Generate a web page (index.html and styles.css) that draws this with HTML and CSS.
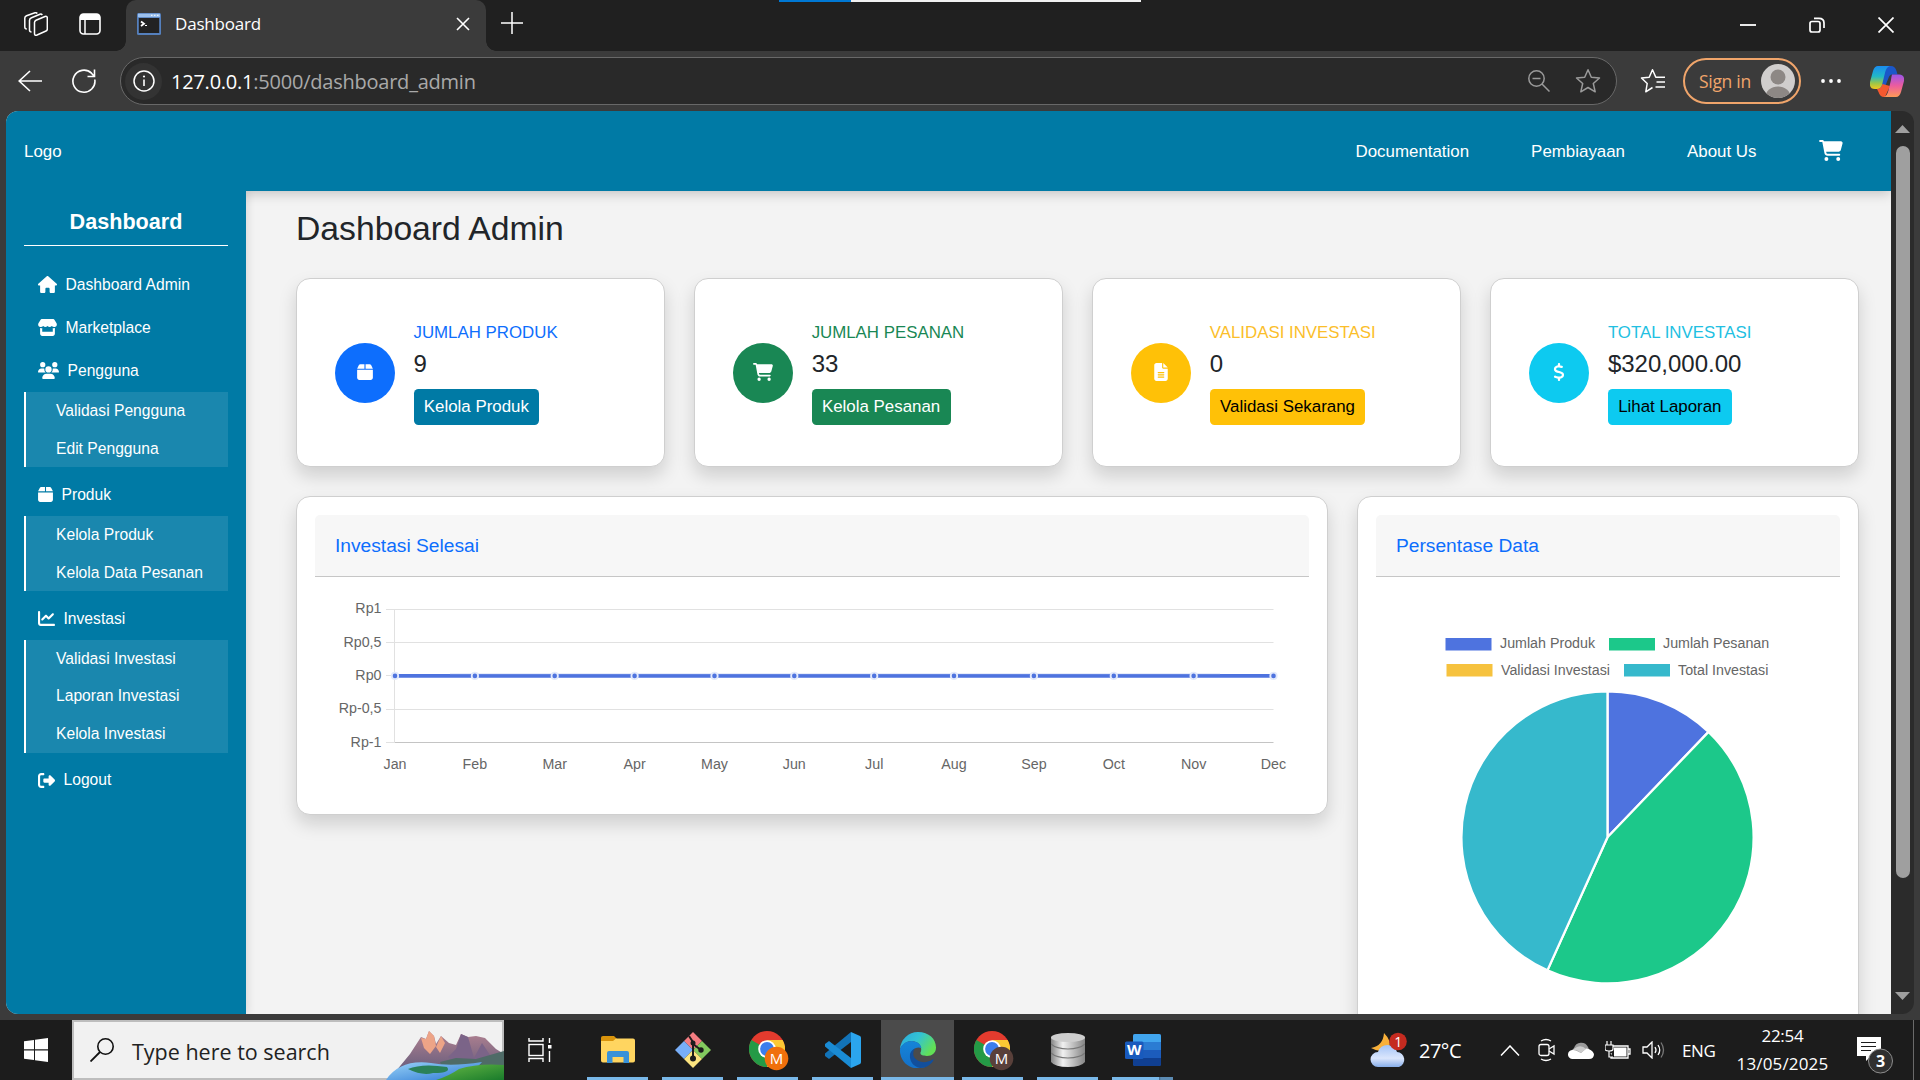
FILE: index.html
```html
<!DOCTYPE html>
<html lang="id">
<head>
<meta charset="utf-8">
<title>Dashboard</title>
<link rel="stylesheet" href="styles.css">
</head>
<body>
<svg class="defs" aria-hidden="true">
  <symbol id="cart" viewBox="0 0 576 512"><path d="M0 24C0 10.7 10.7 0 24 0H69.5c22 0 41.5 12.8 50.6 32h411c26.3 0 45.5 25 38.6 50.4l-41 152.3c-8.5 31.4-37 53.3-69.5 53.3H170.7l5.4 28.5c2.2 11.3 12.1 19.5 23.6 19.5H488c13.3 0 24 10.7 24 24s-10.7 24-24 24H199.7c-34.6 0-64.3-24.6-70.7-58.5L77.4 54.5c-.7-3.8-4-6.5-7.9-6.5H24C10.7 48 0 37.3 0 24zM128 464a48 48 0 1 1 96 0 48 48 0 1 1 -96 0zm336-48a48 48 0 1 1 0 96 48 48 0 1 1 0-96z"/></symbol>
  <symbol id="box" viewBox="0 0 448 512"><path d="M50.7 58.5L0 160H208V32H93.7C75.5 32 58.9 42.3 50.7 58.5zM240 160H448L397.3 58.5C389.1 42.3 372.5 32 354.3 32H240V160zm208 32H0V416c0 35.3 28.7 64 64 64H384c35.3 0 64-28.7 64-64V192z"/></symbol>
  <symbol id="house" viewBox="0 0 576 512"><path d="M575.8 255.5c0 18-15 32.1-32 32.1h-32l.7 160.2c0 2.7-.2 5.4-.5 8.1V472c0 22.1-17.9 40-40 40H392c-22.1 0-40-17.9-40-40V384c0-17.7-14.3-32-32-32H256c-17.7 0-32 14.3-32 32v88c0 22.1-17.9 40-40 40H104c-22.1 0-40-17.9-40-40V287.6H32c-18 0-32-14-32-32.1c0-9 3-17 10-24L266.4 8c7-7 15-8 22-8s15 2 21 7L564.8 231.5c8 7 12 15 11 24z"/></symbol>
  <symbol id="store" viewBox="0 0 576 512"><path d="M112 0H464c14 0 26 7 33 19l61 97c32 50 4 119-55 127a96 96 0 0 1-84-32 96 96 0 0 1-131 0 96 96 0 0 1-131 0 96 96 0 0 1-84 32C14 235-14 166 18 116L79 19C86 7 98 0 112 0zM64 272c24 5 43 4 64-3V384H448V269c21 7 40 8 64 3V448c0 35-29 64-64 64H128c-35 0-64-29-64-64z"/></symbol>
  <symbol id="users" viewBox="0 0 640 512"><path d="M144 0a80 80 0 1 1 0 160A80 80 0 1 1 144 0zM512 0a80 80 0 1 1 0 160A80 80 0 1 1 512 0zM0 299C0 240 48 192 107 192h43c16 0 31 3 45 10-1 7-2 14-2 22 0 38 17 72 43 96H21C10 320 0 310 0 299zM405 320c27-24 43-58 43-96 0-8-1-15-2-22 14-7 29-10 45-10h43c59 0 106 48 106 107 0 12-10 21-21 21zM224 224a96 96 0 1 1 192 0 96 96 0 1 1-192 0zM128 485c0-73 60-133 133-133h118c73 0 133 60 133 133 0 15-12 27-27 27H155c-15 0-27-12-27-27z"/></symbol>
  <symbol id="chart" viewBox="0 0 512 512"><path d="M64 64c0-17.7-14.3-32-32-32S0 46.3 0 64V400c0 44.2 35.8 80 80 80H480c17.7 0 32-14.3 32-32s-14.3-32-32-32H80c-8.8 0-16-7.2-16-16V64zm406.6 86.6c12.5-12.5 12.5-32.8 0-45.3s-32.8-12.5-45.3 0L320 210.7l-57.4-57.4c-12.5-12.5-32.8-12.5-45.3 0l-112 112c-12.5 12.5-12.5 32.8 0 45.3s32.8 12.5 45.3 0L240 221.3l57.4 57.4c12.5 12.5 32.8 12.5 45.3 0l128-128z"/></symbol>
  <symbol id="logout" viewBox="0 0 512 512"><path d="M377.9 105.9L500.7 228.7c7.2 7.2 11.3 17.1 11.3 27.3s-4.1 20.1-11.3 27.3L377.9 406.1c-6.4 6.4-15 9.900-24 9.900c-18.7 0-33.9-15.2-33.9-33.9l0-62.1-128 0c-17.7 0-32-14.3-32-32l0-64c0-17.7 14.3-32 32-32l128 0 0-62.1c0-18.7 15.2-33.9 33.9-33.9c9 0 17.6 3.6 24 9.9zM160 96L96 96c-17.7 0-32 14.3-32 32l0 256c0 17.7 14.3 32 32 32l64 0c17.7 0 32 14.3 32 32s-14.3 32-32 32l-64 0c-53 0-96-43-96-96L0 128C0 75 43 32 96 32l64 0c17.7 0 32 14.3 32 32s-14.3 32-32 32z"/></symbol>
  <symbol id="file" viewBox="0 0 384 512"><path d="M64 0C28.7 0 0 28.7 0 64V448c0 35.3 28.7 64 64 64H320c35.3 0 64-28.7 64-64V160H256c-17.7 0-32-14.3-32-32V0H64zM256 0V128H384L256 0zM112 256H272c8.8 0 16 7.2 16 16s-7.2 16-16 16H112c-8.8 0-16-7.2-16-16s7.2-16 16-16zm0 64H272c8.8 0 16 7.2 16 16s-7.2 16-16 16H112c-8.8 0-16-7.2-16-16s7.2-16 16-16zm0 64H272c8.8 0 16 7.2 16 16s-7.2 16-16 16H112c-8.8 0-16-7.2-16-16s7.2-16 16-16z"/></symbol>
  <symbol id="dollar" viewBox="0 0 320 512"><path d="M160 0c17.7 0 32 14.3 32 32V67.7c1.6 .2 3.1 .4 4.7 .7c.4 .1 .7 .1 1.1 .2l48 8.8c17.4 3.2 28.9 19.9 25.7 37.2s-19.9 28.9-37.2 25.7l-47.5-8.7c-31.3-4.6-58.9-1.5-78.3 6.2s-27.2 18.3-29 28.1c-2 10.7-.5 16.7 1.2 20.4c1.8 3.9 5.5 8.3 12.8 13.2c16.3 10.7 41.3 17.7 73.7 26.3l2.9 .8c28.6 7.6 63.6 16.8 89.6 33.8c14.2 9.3 27.6 21.9 35.9 39.5c8.5 17.9 10.3 37.9 6.4 59.2c-6.9 38-33.1 63.4-65.6 76.7c-13.7 5.6-28.6 9.2-44.4 11V480c0 17.7-14.3 32-32 32s-32-14.3-32-32V445.1c-.4-.1-.9-.1-1.3-.2l-.2 0 0 0c-24.4-3.8-64.5-14.3-91.5-26.3c-16.1-7.2-23.4-26.1-16.2-42.2s26.1-23.4 42.2-16.2c20.9 9.3 55.3 18.5 75.2 21.6c31.9 4.7 58.2 2 76-5.3c16.9-6.9 24.6-16.9 26.8-28.9c1.9-10.6 .4-16.7-1.3-20.4c-1.9-4-5.6-8.4-13-13.3c-16.4-10.7-41.5-17.7-74-26.3l-2.8-.7 0 0C119.4 279.3 84.4 270 58.4 253c-14.2-9.3-27.5-22-35.8-39.6c-8.4-17.9-10.1-37.9-6.1-59.2C23.7 116 52.3 91.2 84.8 78.3c13.3-5.3 27.9-8.9 43.2-11V32c0-17.7 14.3-32 32-32z"/></symbol>
  <symbol id="chrome" viewBox="0 0 36 36">
    <circle cx="18" cy="18" r="18" fill="#e33b2e"/>
    <path d="M18 18 2.4 9A18 18 0 0 0 18 36l7.8-13.5z" fill="#249a46"/>
    <path d="M18 9h15.6A18 18 0 0 1 18 36l7.8-13.5z" fill="#fcc934"/>
    <circle cx="18" cy="18" r="8.8" fill="#fff"/><circle cx="18" cy="18" r="6.9" fill="#3b7ded"/>
  </symbol>
</svg>

<div class="screen">
  <header class="tabstrip">
    <div class="load-bar"></div>
    <svg class="workspaces" viewBox="0 0 24 24" width="24" height="24"><g fill="none" stroke="#fff" stroke-width="1.5" stroke-linejoin="round"><path d="M10.5 10.5Q10.5 9 12 8.300L21 4.500Q23.300 3.800 23.300 6V17Q23.300 18.500 22 19L13 23Q10.500 24 10.500 21.500z"/><path d="M7.500 20Q5.500 20 5.500 18V8.500Q5.500 6.500 7.500 5.700L16 2.200Q17.500 1.800 18.300 3"/><path d="M2.800 17Q.8 17 .8 15V6Q.8 4.500 2.500 3.800L11 .8Q12.500 .5 13.300 1.500"/></g></svg>
    <svg class="tab-actions" viewBox="0 0 22 22" width="22" height="22"><rect x="1" y="1" width="20" height="20" rx="3.500" fill="none" stroke="#fff" stroke-width="1.600"/><path d="M1 7V4Q1 1 4 1H18Q21 1 21 4V7z" fill="#fff"/><path d="M6 7V21" stroke="#fff" stroke-width="1.500"/></svg>
    <div class="tab">
      <svg viewBox="0 0 24 22" width="24" height="22"><rect width="24" height="22" rx="1.500" fill="#5580bd"/><rect x="1" y=".7" width="22" height="3.500" fill="#9cc0ec"/><path d="M14 2.300H22" stroke="#fff" stroke-dasharray="1.500 1.500"/><rect x="1.800" y="5" width="20.400" height="15" fill="#222"/><path d="M4 8.500 7 10.800 4 13" fill="none" stroke="#fff" stroke-width="1.800"/><path d="M8 12.500h2" stroke="#fff"/></svg>
      <span class="tab-title">Dashboard</span>
      <svg viewBox="0 0 14 14" width="14" height="14"><path d="M1 1 13 13M13 1 1 13" stroke="#fff" stroke-width="1.600"/></svg>
    </div>
    <svg class="new-tab" viewBox="0 0 22 22" width="22" height="22"><path d="M11 0V22M0 11H22" stroke="#fff" stroke-width="1.500"/></svg>
    <div class="window-controls">
      <svg viewBox="0 0 16 16" width="16" height="16"><path d="M0 8H16" stroke="#fff" stroke-width="1.800"/></svg>
      <svg viewBox="0 0 16 16" width="16" height="16"><g fill="none" stroke="#fff" stroke-width="1.700"><rect x="1" y="4.500" width="10" height="10.500" rx="2"/><path d="M5 1.300H10Q15 1.300 15 6V11"/></g></svg>
      <svg viewBox="0 0 16 16" width="16" height="16"><path d="M.5 .5 15.500 15.500M15.500 .5 .5 15.500" stroke="#fff" stroke-width="1.700"/></svg>
    </div>
  </header>

  <div class="toolbar">
    <svg class="back" viewBox="0 0 24 22" width="24" height="22"><path d="M24 11H1M12 1 1.200 11 12 21" fill="none" stroke="#fff" stroke-width="1.600"/></svg>
    <svg class="reload" viewBox="0 0 24 24" width="24" height="24"><path d="M22.800 10.500A11 11 0 1 1 19.500 4.200L22 7M22.500 .5V7.500H15.500" fill="none" stroke="#fff" stroke-width="1.600"/></svg>
    <div class="address">
      <span class="site-info"><svg viewBox="0 0 22 22" width="22" height="22"><circle cx="11" cy="11" r="10" fill="none" stroke="#fff" stroke-width="1.500"/><path d="M11 9.500V16" stroke="#fff" stroke-width="1.600"/><circle cx="11" cy="6.500" r="1.100" fill="#fff"/></svg></span>
      <span class="url"><b>127.0.0.1</b>:5000/dashboard_admin</span>
      <svg class="zoom-out" viewBox="0 0 22 22" width="22" height="22"><g fill="none" stroke="#9a9a9a" stroke-width="1.500"><circle cx="8.500" cy="8.500" r="7.700"/><path d="M14 14 21.500 21.500M4.500 8.500H12.500"/></g></svg>
      <svg viewBox="0 0 26 26" width="26" height="26"><path d="M13 1.800 16.300 9.200 24.500 10 18.300 15.500 20.200 23.800 13 19.500 5.800 23.800 7.700 15.500 1.500 10 9.700 9.200z" fill="none" stroke="#9a9a9a" stroke-width="1.500" stroke-linejoin="round"/></svg>
    </div>
    <svg class="favorites" viewBox="0 0 26 26" width="26" height="26"><path d="M16 9.200H15.800L12.500 1.800 9.200 9.200 1.500 10 7.200 15.500 5.800 23.800 12.500 19.500M15.500 9.200H25M16.500 14H25M15.500 19H25" fill="none" stroke="#fff" stroke-width="1.500" stroke-linejoin="round"/></svg>
    <div class="signin">
      <span>Sign in</span>
      <svg viewBox="0 0 34 34" width="34" height="34"><clipPath id="face"><circle cx="17" cy="17" r="17"/></clipPath><g clip-path="url(#face)"><rect width="34" height="34" fill="#d0cecd"/><circle cx="17" cy="13" r="7.500" fill="#8d8885"/><ellipse cx="17" cy="33" rx="12.500" ry="10.500" fill="#8d8885"/></g></svg>
    </div>
    <svg class="more" viewBox="0 0 20 4" width="20" height="4"><circle cx="2" cy="2" r="1.900" fill="#fff"/><circle cx="10" cy="2" r="1.900" fill="#fff"/><circle cx="18" cy="2" r="1.900" fill="#fff"/></svg>
    <svg class="copilot" viewBox="0 0 34 31" width="34" height="31">
      <defs>
        <linearGradient id="cpA" x1="0" y1="0" x2="0" y2="1"><stop offset="0" stop-color="#1a8cf0"/><stop offset=".45" stop-color="#21b8c7"/><stop offset=".75" stop-color="#9bc64a"/><stop offset="1" stop-color="#f2c81d"/></linearGradient>
        <linearGradient id="cpB" x1="0" y1="0" x2="0" y2="1"><stop offset="0" stop-color="#9a55ea"/><stop offset=".5" stop-color="#ec5c9e"/><stop offset="1" stop-color="#ff9a55"/></linearGradient>
      </defs>
      <path d="M8 0H21Q25 0 26.500 5L27.500 8.500H22Q19.500 8.500 18.500 12L14 23H8L12 8z" fill="#1b57c9"/>
      <path d="M8 0H20Q16.500 1 15.200 6L12 19Q11 23 7 23H5Q-1 23 0 16L3 5Q4.500 0 8 0z" fill="url(#cpA)"/>
      <path d="M7 23Q11 23 12.500 18L20 20 15 31H14Q10 31 8.500 26z" fill="#f4582f"/>
      <path d="M22 8.500H29Q35 9 34 15L31 26Q29.500 31 26 31H14Q17 30 18.300 25L21 14Q21.500 10 22 8.500z" fill="url(#cpB)"/>
    </svg>
  </div>

  <div class="viewport">
    <div class="page">
      <nav class="topnav">
        <a class="brand">Logo</a>
        <a>Documentation</a>
        <a>Pembiayaan</a>
        <a>About Us</a>
        <svg class="icon" width="24" height="21"><use href="#cart"/></svg>
      </nav>
      <div class="body">
        <aside class="sidebar">
          <h2>Dashboard</h2>
          <a class="item"><svg class="icon" width="19" height="17"><use href="#house"/></svg>Dashboard Admin</a>
          <a class="item"><svg class="icon" width="19" height="17"><use href="#store"/></svg>Marketplace</a>
          <a class="item"><svg class="icon" width="21" height="17"><use href="#users"/></svg>Pengguna</a>
          <div class="submenu"><a>Validasi Pengguna</a><a>Edit Pengguna</a></div>
          <a class="item"><svg class="icon" width="15" height="17"><use href="#box"/></svg>Produk</a>
          <div class="submenu"><a>Kelola Produk</a><a>Kelola Data Pesanan</a></div>
          <a class="item"><svg class="icon" width="17" height="17"><use href="#chart"/></svg>Investasi</a>
          <div class="submenu"><a>Validasi Investasi</a><a>Laporan Investasi</a><a>Kelola Investasi</a></div>
          <a class="item"><svg class="icon" width="17" height="17"><use href="#logout"/></svg>Logout</a>
        </aside>
        <main class="content">
          <h1>Dashboard Admin</h1>
          <section class="stats">
            <article class="card stat produk"><span class="disc"><svg class="icon" width="16" height="18"><use href="#box"/></svg></span><div><h3>JUMLAH PRODUK</h3><p>9</p><a class="btn">Kelola Produk</a></div></article>
            <article class="card stat pesanan"><span class="disc"><svg class="icon" width="20" height="18"><use href="#cart"/></svg></span><div><h3>JUMLAH PESANAN</h3><p>33</p><a class="btn">Kelola Pesanan</a></div></article>
            <article class="card stat validasi"><span class="disc"><svg class="icon" width="14" height="18"><use href="#file"/></svg></span><div><h3>VALIDASI INVESTASI</h3><p>0</p><a class="btn">Validasi Sekarang</a></div></article>
            <article class="card stat total"><span class="disc"><svg class="icon" width="12" height="18"><use href="#dollar"/></svg></span><div><h3>TOTAL INVESTASI</h3><p>$320,000.00</p><a class="btn">Lihat Laporan</a></div></article>
          </section>
          <section class="charts">
            <article class="card panel line">
              <h4>Investasi Selesai</h4>
              <svg class="chart" viewBox="315 577 994 218" width="994" height="218">
                <g stroke="#e1e1e1" stroke-width="1"><path d="M386 609.500H1273.500M386 642.500H1273.500M386 675.500H1273.500M386 709.500H1273.500M386 742.500H395M394.500 609V743"/></g>
                <path d="M395 742.500H1273.500" stroke="#c4c4c4"/>
                <g class="ylabels"><text x="381.500" y="613">Rp1</text><text x="381.500" y="646.500">Rp0,5</text><text x="381.500" y="680">Rp0</text><text x="381.500" y="713">Rp-0,5</text><text x="381.500" y="747">Rp-1</text></g>
                <path d="M395 675.900H1273.500" stroke="#4e73df" stroke-width="3.600"/>
                <path d="M450 674.300H1220" stroke="#6d8be4" stroke-width=".8"/>
                <g class="points"><circle cx="395" cy="675.900" r="3.200"/><circle cx="474.900" cy="675.900" r="3.200"/><circle cx="554.700" cy="675.900" r="3.200"/><circle cx="634.600" cy="675.900" r="3.200"/><circle cx="714.500" cy="675.900" r="3.200"/><circle cx="794.300" cy="675.900" r="3.200"/><circle cx="874.200" cy="675.900" r="3.200"/><circle cx="954" cy="675.900" r="3.200"/><circle cx="1033.900" cy="675.900" r="3.200"/><circle cx="1113.800" cy="675.900" r="3.200"/><circle cx="1193.600" cy="675.900" r="3.200"/><circle cx="1273.500" cy="675.900" r="3.200"/></g>
                <g class="months"><text x="395" y="769">Jan</text><text x="474.900" y="769">Feb</text><text x="554.700" y="769">Mar</text><text x="634.600" y="769">Apr</text><text x="714.500" y="769">May</text><text x="794.300" y="769">Jun</text><text x="874.200" y="769">Jul</text><text x="954" y="769">Aug</text><text x="1033.900" y="769">Sep</text><text x="1113.800" y="769">Oct</text><text x="1193.600" y="769">Nov</text><text x="1273.500" y="769">Dec</text></g>
              </svg>
            </article>
            <article class="card panel pie">
              <h4>Persentase Data</h4>
              <svg class="chart" viewBox="1376 577 464 480" width="464" height="480">
                <rect x="1445.500" y="638" width="46" height="12.500" fill="#4e73df"/><rect x="1609" y="638" width="46" height="12.500" fill="#1cc88a"/>
                <rect x="1446.500" y="664" width="46" height="12.500" fill="#f6c23e"/><rect x="1624" y="664" width="46" height="12.500" fill="#36b9cc"/>
                <text x="1500" y="648">Jumlah Produk</text><text x="1663" y="648">Jumlah Pesanan</text>
                <text x="1501" y="675">Validasi Investasi</text><text x="1678" y="675">Total Investasi</text>
                <g stroke="#fff" stroke-width="2.300" stroke-linejoin="round">
                  <path d="M1607.500 837.300V691.300A146 146 0 0 1 1708.550 731.900z" fill="#4e73df"/>
                  <path d="M1607.500 837.300 1708.550 731.900A146 146 0 0 1 1547.400 970.400z" fill="#1cc88a"/>
                  <path d="M1607.500 837.300 1547.400 970.400A146 146 0 0 1 1607.500 691.300z" fill="#36b9cc"/>
                </g>
              </svg>
            </article>
          </section>
        </main>
      </div>
    </div>
    <div class="scrollbar">
      <svg viewBox="0 0 15 8" width="15" height="8"><path d="M0 8 7.500 0 15 8z" fill="#9f9f9f"/></svg>
      <div class="thumb"></div>
      <svg class="down" viewBox="0 0 15 8" width="15" height="8"><path d="M0 0 7.500 8 15 0z" fill="#9f9f9f"/></svg>
    </div>
  </div>

  <footer class="taskbar">
    <div class="start"><svg viewBox="0 0 24 24" width="24" height="24"><path d="M0 3.300 10 2V11.300H0zM11 1.800 24 0V11.300H11zM0 12.500H10V22L0 20.700zM11 12.500H24V24L11 22.200z" fill="#fff"/></svg></div>
    <div class="search">
      <svg viewBox="0 0 24 24" width="24" height="24"><circle cx="15.500" cy="8.500" r="7.700" fill="none" stroke="#111" stroke-width="1.600"/><path d="M10 14 .5 23.500" stroke="#111" stroke-width="1.800"/></svg>
      <span>Type here to search</span>
      <svg class="scene" viewBox="0 0 118 50" width="118" height="50">
        <defs><linearGradient id="rock" x1="0" y1="0" x2="0" y2="1"><stop offset="0" stop-color="#b28291"/><stop offset="1" stop-color="#565477"/></linearGradient><linearGradient id="lake" x1="0" y1="0" x2="1" y2="1"><stop offset="0" stop-color="#9bd4f7"/><stop offset="1" stop-color="#2a76d4"/></linearGradient><linearGradient id="grass" x1="0" y1="0" x2="1" y2="1"><stop offset="0" stop-color="#66b845"/><stop offset="1" stop-color="#197b2b"/></linearGradient></defs>
        <path d="M10 41 24 24 35 7 40 9 43 1 48 6 50 14 55 6 63 13 70 15 75 4 82 7 90 6 99 8 110 19 118 24V50H10z" fill="url(#rock)"/>
        <path d="M35 8 40 9 43 1 48 6 50 16 44 24 38 18zM55 6 59 13 54 23 50 17z" fill="#eda487"/>
        <path d="M75 4 82 7 88 28 96 13 106 28 118 25V32L70 33 62 27 70 19z" fill="#7b6488"/>
        <path d="M54 32 70 28 90 29 118 21V42H58z" fill="#4f6b67"/>
        <path d="M0 50Q14 29 45 33 65 37 96 32L80 50z" fill="url(#lake)"/>
        <path d="M22 39Q36 33 61 37 66 43 47 43 36 46 22 39z" fill="#2b8158"/>
        <path d="M50 50Q63 46 73 39 92 33 118 35V50z" fill="url(#grass)"/>
      </svg>
    </div>
    <div class="taskview"><svg viewBox="0 0 24 24" width="24" height="24"><g fill="none" stroke="#fff" stroke-width="1.400"><path d="M1 0V3H15V0M1 24V20.500H15V24M21.500 0V5M21.500 13V24"/><rect x="1" y="6.500" width="14" height="11"/></g><rect x="20" y="7" width="3.500" height="3.500" fill="#fff"/></svg></div>
    <div class="apps">
      <div class="app"><svg viewBox="0 0 34 28" width="34" height="28"><path d="M0 1.500Q0 0 2 0H13L16 3V8H0z" fill="#d9940c"/><path d="M0 5H12L15 2.500H32Q34 2.500 34 4.500V24.500Q34 26.500 32 26.500H2Q0 26.500 0 24.500z" fill="#ffd560"/><path d="M6 27V17Q6 15 8 15H26Q28 15 28 17V27H22.500V21H11.500V27z" fill="#3992d8"/></svg></div>
      <div class="app"><svg viewBox="0 0 36 36" width="36" height="36"><path d="M18 0 27 9 18 18 9 9z" fill="#f47d82"/><path d="M27 9 36 18 27 27 18 18z" fill="#83c95e"/><path d="M9 9 18 18 9 27 0 18z" fill="#78aef7"/><path d="M18 18 27 27 18 36 9 27z" fill="#fce47f"/><path d="M14 4 18 10V27M18 12 26 18" fill="none" stroke="#1c1c1c" stroke-width="2"/><circle cx="18" cy="11" r="2.500" fill="#1c1c1c"/><circle cx="26" cy="18" r="2.700" fill="#1c1c1c"/><circle cx="18" cy="26.500" r="3" fill="#1c1c1c"/></svg></div>
      <div class="app profile"><svg viewBox="0 0 40 40" width="40" height="40"><use href="#chrome" width="36" height="36"/><circle cx="27.500" cy="27.500" r="11.800" fill="#f0700c"/><text class="badge-letter" x="27.500" y="33">M</text></svg></div>
      <div class="app"><svg viewBox="0 0 36 36" width="36" height="36"><path d="M26 0V10L4 27 0 24V21.500z" fill="#1273b8"/><path d="M26 36V26L4 9 0 12V14.500z" fill="#1a8bd4"/><path d="M26 0 35 4Q36 4.500 36 6V30Q36 31.500 35 32L26 36z" fill="#2ba5ee"/></svg></div>
      <div class="app active"><svg viewBox="0 0 36 36" width="36" height="36"><defs><linearGradient id="edgeTop" x1="0" y1="0" x2="1" y2=".5"><stop offset="0" stop-color="#2ba8dc"/><stop offset=".5" stop-color="#33c3d4"/><stop offset="1" stop-color="#62e056"/></linearGradient><linearGradient id="edgeLow" x1="0" y1="0" x2="0" y2="1"><stop offset="0" stop-color="#1585d8"/><stop offset="1" stop-color="#1470c8"/></linearGradient></defs><path d="M0 17A18 18 0 0 1 18 0C29 0 36 7 36 15.500 36 21 32 24 27 24 22 24 20 22.500 20.500 20.500 22 18 22 10 12 9Q4 9 0 17z" fill="url(#edgeTop)"/><path d="M0 17Q3 9 12 9 20 9.500 21.500 16 13 14 12 22 12 32 25 35A18 18 0 0 1 0 17z" fill="url(#edgeLow)"/><path d="M15 16.500Q12 20 14 25 18 31 26 30 31 29 33.500 27 34 28 32 30.500 27 36 20 36 9 33 10 22 11.500 17.500 15 16.500z" fill="#124f9c"/></svg></div>
      <div class="app profile"><svg viewBox="0 0 40 40" width="40" height="40"><use href="#chrome" width="36" height="36"/><circle cx="27.500" cy="27.500" r="11.800" fill="#59403a"/><text class="badge-letter" x="27.500" y="33">M</text></svg></div>
      <div class="app"><svg viewBox="0 0 34 34" width="34" height="34"><defs><linearGradient id="steel"><stop offset="0" stop-color="#858585"/><stop offset=".35" stop-color="#f1f1f1"/><stop offset="1" stop-color="#858585"/></linearGradient></defs><path d="M0 4V29Q4 34 17 34T34 29V4z" fill="url(#steel)"/><ellipse cx="17" cy="4.500" rx="17" ry="4.500" fill="#cecece"/><path d="M0 11Q5 16 17 16T34 11M0 20Q5 25 17 25T34 20" fill="none" stroke="#777" stroke-width="1.200"/></svg></div>
      <div class="app multi"><svg viewBox="0 0 36 32" width="36" height="32"><rect x="8" width="28" height="32" rx="2" fill="#1c5cbc"/><path d="M8 8V2Q8 0 10 0H34Q36 0 36 2V8z" fill="#41a5ee"/><path d="M8 8H36V16H8z" fill="#2b7cd3"/><path d="M8 24H36V30Q36 32 34 32H10Q8 32 8 30z" fill="#103f91"/><rect y="7.500" width="18.500" height="17.500" rx="1.500" fill="#185abd"/><text class="word-letter" x="9.200" y="21">W</text></svg></div>
    </div>
    <div class="weather">
      <svg viewBox="0 0 38 36" width="38" height="36"><defs><linearGradient id="cloudFill" x1="0" y1="0" x2="0" y2="1"><stop offset="0" stop-color="#a4c4f7"/><stop offset=".6" stop-color="#dbe6fc"/><stop offset="1" stop-color="#87aeea"/></linearGradient></defs><path d="M14 1Q22 9 19 16 12 22 1 16 13 14 14 1z" fill="#f8b03a"/><path d="M8 35A7.500 7.500 0 0 1 8 20 10 10 0 0 1 27 20 7.700 7.700 0 0 1 29 35z" fill="url(#cloudFill)"/><circle cx="28" cy="9.500" r="8.800" fill="#c52b20"/><text class="alert-count" x="28" y="14.500">1</text></svg>
      <span>27°C</span>
    </div>
    <div class="tray">
      <svg viewBox="0 0 20 11" width="20" height="11"><path d="M1 10.500 10 1 19 10.500" fill="none" stroke="#fff" stroke-width="1.500"/></svg>
      <svg class="camera" viewBox="0 0 18 24" width="18" height="24"><g fill="none" stroke="#fff" stroke-width="1.300"><rect x="1" y="6.500" width="10" height="11" rx="2"/><path d="M11 11 16 8V16L11 13M3 3Q8 0 13 3M3 21Q8 24 13 21"/></g></svg>
      <svg class="cloud" viewBox="0 0 26 17" width="26" height="17"><path d="M5 13A6 6 0 0 1 6 6 7.500 7.500 0 0 1 20 5L22 10 8 16z" fill="#9b9b9b"/><path d="M4 17A4.500 4.500 0 0 1 5 8Q8 8 10 9.500L13 11 18 6.500Q24 7 26 12 26 17 21 17z" fill="#fff"/><path d="M4 8Q8 7 13 11L18 7Q14 3 9 5z" fill="#ccc"/></svg>
      <svg class="battery" viewBox="0 0 26 18" width="26" height="18"><path d="M6 5H23V17H6V12M23 8H25V13H23" fill="none" stroke="#fff" stroke-width="1.300"/><rect x="9" y="6.500" width="12.500" height="9" fill="#fff"/><path d="M2 0V4M6 0V4M0 4H8V8Q8 10 4 10T0 8zM4 10V16H8" fill="#1c1c1c" stroke="#fff" stroke-width="1.200"/></svg>
      <svg class="speaker" viewBox="0 0 24 18" width="24" height="18"><g fill="none" stroke="#fff" stroke-width="1.300"><path d="M1 6H5L10 1V17L5 12H1z"/><path d="M13 6Q15 9 13 12M16 4Q19.500 9 16 14"/><path d="M19 1.500Q24 9 19 16.500" stroke="#777"/></g></svg>
      <span class="lang">ENG</span>
    </div>
    <div class="clock"><span>22:54</span><span class="date">13/05/2025</span></div>
    <svg class="notify" viewBox="0 0 38 38" width="38" height="38"><path d="M0 0H24V19H14L9 24V19H0z" fill="#fff"/><path d="M4 5.500H19M4 9.500H19M4 13.500H14" stroke="#1c1c1c" stroke-width="1.200"/><circle cx="23.500" cy="24" r="12" fill="#303030" stroke="#8d8d8d"/><text x="23.500" y="29.500">3</text></svg>
    <div class="show-desktop"></div>
  </footer>
</div>
</body>
</html>
```
FILE: styles.css
```css
* { box-sizing: border-box; }
body { margin: 0; background: #3b3b3b; }
h1, h2, h3, h4, p { margin: 0; font-weight: 400; }
svg { display: block; flex: none; }
.defs { position: absolute; width: 0; height: 0; }
.icon { fill: currentColor; }

.screen {
  width: 1920px;
  height: 1080px;
  display: flex;
  flex-direction: column;
  overflow: hidden;
  background: #3b3b3b;
  color: #fff;
  font-family: "Open Sans", "Noto Sans", sans-serif;
}

/* Tab strip */
.tabstrip {
  position: relative;
  height: 51px;
  display: flex;
  align-items: center;
  padding-left: 24px;
  background: #202020;
}
.load-bar {
  position: absolute;
  left: 779px;
  top: 0;
  width: 362px;
  height: 2px;
  background: linear-gradient(90deg, #0078d4 72px, #f0f0f0 72px);
}
.workspaces { margin: 0 31px 3px 0; }
.tab-actions { margin: 0 25px 3px 0; }
.tab {
  position: relative;
  width: 360px;
  height: 51px;
  display: flex;
  align-items: center;
  padding: 0 16px 4px 11px;
  border-radius: 10px 10px 0 0;
  background: #3b3b3b;
}
.tab::before, .tab::after {
  content: "";
  position: absolute;
  bottom: 0;
  width: 10px;
  height: 10px;
}
.tab::before { left: -10px; background: radial-gradient(circle at 0 0, transparent 9.500px, #3b3b3b 10px); }
.tab::after { right: -10px; background: radial-gradient(circle at 100% 0, transparent 9.500px, #3b3b3b 10px); }
.tab-title { flex: 1; margin-left: 14px; font-size: 17px; letter-spacing: -.2px; }
.new-tab { margin: 0 0 5px 15px; }
.window-controls { display: flex; gap: 53px; margin: 0 26px 1px auto; }

/* Toolbar */
.toolbar { height: 60px; display: flex; align-items: center; padding-left: 18px; }
.reload { margin: 0 24px 0 30px; }
.address {
  width: 1497px;
  height: 48px;
  display: flex;
  align-items: center;
  padding: 0 15px 0 4px;
  border: 1.500px solid #686868;
  border-radius: 24px;
  background: #292929;
}
.site-info {
  width: 37px;
  height: 37px;
  display: grid;
  place-items: center;
  border-radius: 50%;
  background: #333;
}
.url { flex: 1; margin-left: 9px; font-size: 20px; letter-spacing: -.23px; color: #a9a9a9; }
.url b { font-weight: 400; color: #fff; }
.zoom-out { margin-right: 25px; }
.favorites { margin-left: 23px; }
.signin {
  width: 118px;
  height: 46px;
  display: flex;
  align-items: center;
  justify-content: space-between;
  margin-left: 17px;
  padding: 0 4px 0 14px;
  border: 2px solid #f0a56b;
  border-radius: 23px;
  color: #f0a56b;
  font-size: 17.500px;
  letter-spacing: -.3px;
}
.more { margin-left: 20px; }
.copilot { margin-left: 29px; }

/* Browser viewport */
.viewport {
  height: 903px;
  display: flex;
  margin: 0 6px;
  border-radius: 12px;
  overflow: hidden;
  background: #2b2b2b;
}
.page {
  width: 1885px;
  display: flex;
  flex-direction: column;
  overflow: hidden;
  background: #f3f3f3;
  font-family: "Liberation Sans", Arial, sans-serif;
}
.scrollbar { width: 23px; display: flex; flex-direction: column; align-items: center; padding: 14px 0; }
.thumb { width: 14px; height: 732px; margin: 13px 0 0; border-radius: 7px; background: #9f9f9f; }
.down { margin-top: auto; }

.topnav {
  position: relative;
  flex: none;
  height: 80px;
  display: flex;
  align-items: center;
  gap: 62px;
  padding: 0 48.500px 0 18px;
  background: #007aa5;
  box-shadow: 0 2px 12px rgba(0, 0, 0, .22);
  font-size: 16.900px;
}
.topnav a { padding-top: 2px; }
.topnav .icon { margin-bottom: 2px; }
.brand { margin-right: auto; }
.body { height: 823px; display: flex; }

/* Sidebar */
.sidebar {
  position: relative;
  flex: none;
  width: 240px;
  padding: 9px 18px 0;
  background: #007aa5;
  box-shadow: 2px 0 8px rgba(0, 0, 0, .1);
  clip-path: inset(0 -12px 0 0);
  font-size: 15.650px;
}
.sidebar h2 {
  height: 46px;
  margin-bottom: 17px;
  border-bottom: 1.500px solid #fff;
  line-height: 43px;
  text-align: center;
  font-size: 21.600px;
  font-weight: 700;
}
.item { height: 43px; display: flex; align-items: center; gap: 8.500px; padding: .5px 0 0 14px; }
.submenu {
  margin-bottom: 5.500px;
  border-left: 2px solid #fff;
  background: rgba(255, 255, 255, .1);
}
.submenu a { display: block; height: 37.700px; padding-left: 30px; line-height: 38.600px; }

/* Dashboard content */
.content { flex: 1; padding: 17px 32px 0 50px; color: #212529; }
.content h1 { height: 40px; margin-bottom: 30px; font-size: 33.700px; line-height: 40px; }
.card {
  border: 1px solid #cfcfcf;
  border-radius: 14px;
  background: #fff;
  box-shadow: 0 9px 18px rgba(0, 0, 0, .15);
}
.stats { display: grid; grid-template-columns: repeat(4, 1fr); gap: 29.500px; margin-bottom: 29px; }
.stat { height: 189px; display: flex; align-items: center; gap: 19px; padding-left: 37.500px; }
.disc {
  width: 60px;
  height: 60px;
  display: grid;
  place-items: center;
  padding-bottom: 3px;
  margin-top: 1px;
  border-radius: 50%;
  background: var(--tone);
  color: #fff;
}
.stat div { margin-top: 3px; }
.stat h3 { height: 27px; color: var(--tone); font-size: 16.850px; line-height: 20px; white-space: nowrap; }
.stat p { height: 39px; font-size: 24px; line-height: 28px; }
.btn {
  display: inline-block;
  height: 36px;
  padding: 0 10.300px;
  border-radius: 4.500px;
  background: var(--tone);
  color: var(--ink, #fff);
  font-size: 16.900px;
  line-height: 35px;
  white-space: nowrap;
}
.produk { --tone: #0d6efd; }
.produk .btn { background: #007aa5; }
.pesanan { --tone: #198754; }
.validasi { --tone: #ffc107; --ink: #000; }
.total { --tone: #0dcaf0; --ink: #000; }
.total h3 { color: #22bfe2; }
.validasi h3 { color: #fbbe2a; }

.charts { display: flex; align-items: flex-start; justify-content: space-between; }
.panel { padding: 18px; }
.line { width: 1032px; height: 319px; }
.pie { width: 502px; height: 570px; }
.panel h4 {
  height: 62px;
  padding-left: 20px;
  border-bottom: 1px solid #c6c6c6;
  border-radius: 5px 5px 0 0;
  background: #f7f7f7;
  color: #0d6efd;
  font-size: 19.200px;
  line-height: 61px;
}
.chart text { font-size: 14.250px; fill: #666; }
.ylabels { text-anchor: end; }
.months { text-anchor: middle; }
.points circle { fill: #4e73df; stroke: #e2e9fb; stroke-width: 1.800px; }

/* Taskbar */
.taskbar { height: 60px; display: flex; align-items: center; margin-top: 6px; background: #1c1c1c; }
.start { width: 72px; padding-left: 24px; }
.search {
  width: 432px;
  height: 60px;
  display: flex;
  align-items: center;
  padding-left: 16px;
  border: 2px solid #bdbdbd;
  background: #f1f1f1;
  color: #222;
  font-size: 21.500px;
}
.search span { margin: 2px 0 0 18px; white-space: nowrap; }
.scene { margin: 10px -2px 0 auto; }
.taskview { width: 76px; padding-left: 24px; }
.apps { display: flex; }
.app {
  position: relative;
  width: 75px;
  height: 60px;
  display: grid;
  place-items: center;
}
.app::after {
  content: "";
  position: absolute;
  left: 7px;
  bottom: 0;
  width: 61px;
  height: 3px;
  background: #79b8e8;
}
.profile { padding: 2px 0 0 2px; }
.active { background: linear-gradient(90deg, transparent 1px, #4b4b4b 1px, #4b4b4b 74px, transparent 74px); }
.active::after { left: 1px; width: 73px; }
.multi::after { background: linear-gradient(90deg, #79b8e8 47px, #46698a 47px, #5c8bb3 49px); }
.badge-letter { font-size: 15px; fill: #fff; text-anchor: middle; }
.word-letter { font-size: 15px; font-weight: 700; fill: #fff; text-anchor: middle; }
.weather { display: flex; align-items: center; gap: 11px; margin-left: 190px; font-size: 20px; letter-spacing: -.5px; }
.alert-count { font-size: 14px; fill: #fff; text-anchor: middle; }
.tray { display: flex; align-items: center; margin-left: 39px; }
.camera { margin-left: 18px; }
.cloud { margin-left: 12px; }
.battery { margin-left: 11px; }
.speaker { margin-left: 11px; }
.lang { margin-left: 16px; font-size: 17px; letter-spacing: -.4px; }
.clock {
  width: 100px;
  display: flex;
  flex-direction: column;
  align-items: center;
  margin-left: 17px;
  font-size: 17px;
  line-height: 28px;
  letter-spacing: -.3px;
}
.date { letter-spacing: .15px; }
.notify { margin: 12px 0 0 25px; }
.notify text { font-size: 16px; font-weight: 700; fill: #fff; text-anchor: middle; }
.show-desktop { width: 1px; height: 60px; margin: 0 6px 0 auto; background: #6a6a6a; }
```
